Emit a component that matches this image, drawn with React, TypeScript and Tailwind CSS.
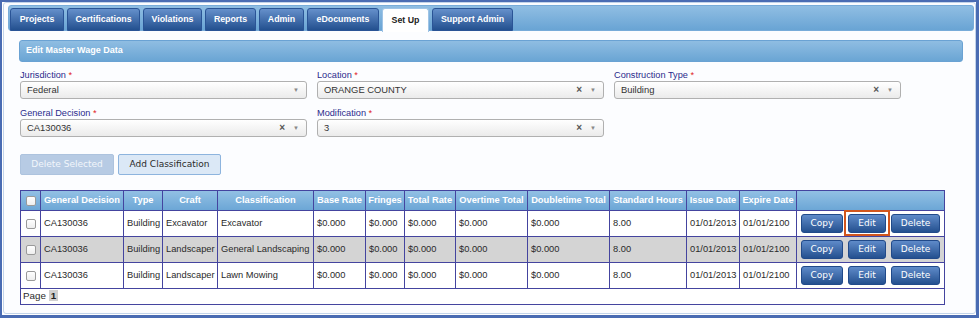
import React from "react";

const tabs = [
  { label: "Projects", w: "w-[54px]" },
  { label: "Certifications", w: "w-[73px]" },
  { label: "Violations", w: "w-[59px]" },
  { label: "Reports", w: "w-[51px]" },
  { label: "Admin", w: "w-[45px]" },
  { label: "eDocuments", w: "w-[72px]" },
  { label: "Set Up", w: "w-[47px]", active: true },
  { label: "Support Admin", w: "w-[81px]" },
];

const colWidths = [20, 83, 39, 55, 96, 52, 39, 51, 72, 82, 77, 53, 57, 148];

const headers = [
  "",
  "General Decision",
  "Type",
  "Craft",
  "Classification",
  "Base Rate",
  "Fringes",
  "Total Rate",
  "Overtime Total",
  "Doubletime Total",
  "Standard Hours",
  "Issue Date",
  "Expire Date",
  "",
];

const rows = [
  { decision: "CA130036", type: "Building", craft: "Excavator", cls: "Excavator" },
  { decision: "CA130036", type: "Building", craft: "Landscaper", cls: "General Landscaping" },
  { decision: "CA130036", type: "Building", craft: "Landscaper", cls: "Lawn Mowing" },
];

function Field({ label, value, clear }: { label: string; value: string; clear?: boolean }) {
  return (
    <div className="flex flex-col">
      <div className="h-[11px] text-[9.2px] leading-[11px] text-[#2b2b8c]">
        {label} <span className="text-[#e0201c]">*</span>
      </div>
      <div className="flex h-[18px] items-center rounded-[3px] border border-[#b0b0b0] bg-linear-to-b from-white to-[#ebebeb] pl-[6px] pr-[7px] text-[9.4px] text-[#333]">
        <span className="flex-1">{value}</span>
        {clear && <span className="mr-[8px] text-[10px] font-bold leading-none text-[#555]">×</span>}
        <span className="text-[6px] leading-none text-[#888]">▼</span>
      </div>
    </div>
  );
}

function ActionButton({ label, w, highlight }: { label: string; w: string; highlight?: boolean }) {
  return (
    <div className="relative">
      <button
        className={`${w} h-[19px] rounded-[3px] border border-[#214a8a] bg-linear-to-b from-[#5f8bc9] to-[#24508f] font-['DejaVu_Sans',sans-serif] text-[9px] text-white`}
      >
        {label}
      </button>
      {highlight && (
        <span className="absolute -left-[4px] -right-[4px] -top-[4px] -bottom-[3px] border-2 border-[#d2561d]" />
      )}
    </div>
  );
}

function Checkbox() {
  return <div className="mx-auto h-[10px] w-[10px] rounded-[2px] border border-[#9a9a9a] bg-linear-to-b from-white to-[#eeeeee]" />;
}

export default function App() {
  return (
    <div className="h-[318px] w-[979px] overflow-hidden border-t-2 border-l-2 border-r-[3px] border-b-[3px] border-[#4a6cb3] bg-white font-['Liberation_Sans',Arial,sans-serif]">
      <div className="ml-[1px] h-[312px] w-[973px] rounded-[3px] border border-[#c3d4ea] bg-[#fcfdff] pt-[2px]">
        {/* tab strip */}
        <div className="ml-[4px] mr-[1px] flex h-[26px] gap-[3px] rounded-[3px] border border-[#78acd9] bg-linear-to-b from-[#90bee3] to-[#69a4d4] pl-[1px] pt-[2px]">
          {tabs.map((t) =>
            t.active ? (
              <div
                key={t.label}
                className={`${t.w} flex h-[24px] items-center justify-center rounded-t-[3px] border border-b-0 border-[#9fc4e6] bg-white text-[8.8px] font-bold text-[#222]`}
              >
                {t.label}
              </div>
            ) : (
              <div
                key={t.label}
                className={`${t.w} flex h-[23px] items-center justify-center rounded-t-[3px] border border-[#2a5496] bg-linear-to-b from-[#6590cb] to-[#23508f] text-[8.8px] font-bold text-white`}
              >
                {t.label}
              </div>
            )
          )}
        </div>

        {/* section header */}
        <div className="ml-[15px] mr-[12px] mt-[9px] flex h-[22px] items-center rounded-[3px] border border-[#6aa2d3] bg-linear-to-b from-[#8fbde2] to-[#6aa5d4] pl-[6px] text-[9px] font-bold text-white">
          Edit Master Wage Data
        </div>

        <div className="ml-[16px] mt-[8px]">
          <div className="grid grid-cols-[287px_287px_287px] gap-x-[10px] gap-y-[9px]">
            <Field label="Jurisdiction" value="Federal" />
            <Field label="Location" value="ORANGE COUNTY" clear />
            <Field label="Construction Type" value="Building" clear />
            <Field label="General Decision" value="CA130036" clear />
            <Field label="Modification" value="3" clear />
          </div>

          <div className="mt-[17px] flex gap-[4px] font-['DejaVu_Sans',sans-serif] text-[9px]">
            <button className="h-[21px] w-[94px] rounded-[2px] border border-[#adc3de] bg-[#b7cbe4] text-[#f2f6fb]">
              Delete Selected
            </button>
            <button className="h-[21px] w-[103px] rounded-[2px] border border-[#8db4de] bg-[#dbe8f6] text-[#2a2a2a]">
              Add Classification
            </button>
          </div>

          <table className="mt-[15px] w-[924px] table-fixed border-collapse border border-[#44449f] text-[9.3px] text-[#2a2a2a]">
            <colgroup>
              {colWidths.map((w, i) => (
                <col key={i} style={{ width: w }} />
              ))}
            </colgroup>
            <thead>
              <tr className="h-[20px] bg-linear-to-b from-[#92c0e4] to-[#6aa5d5]">
                {headers.map((h, i) => (
                  <th
                    key={i}
                    className="whitespace-nowrap border border-[#44449f] px-0 text-center font-bold text-white"
                  >
                    {i === 0 ? <Checkbox /> : h}
                  </th>
                ))}
              </tr>
            </thead>
            <tbody>
              {rows.map((r, idx) => (
                <tr key={idx} className={`h-[26px] ${idx === 1 ? "bg-[#d4d4d4]" : "bg-white"}`}>
                  <td className="border border-[#44449f]">
                    <Checkbox />
                  </td>
                  <td className="whitespace-nowrap border border-[#44449f] px-[3px]">{r.decision}</td>
                  <td className="whitespace-nowrap border border-[#44449f] px-[3px]">{r.type}</td>
                  <td className="whitespace-nowrap border border-[#44449f] px-[3px]">{r.craft}</td>
                  <td className="whitespace-nowrap border border-[#44449f] px-[3px]">{r.cls}</td>
                  <td className="whitespace-nowrap border border-[#44449f] px-[3px]">$0.000</td>
                  <td className="whitespace-nowrap border border-[#44449f] px-[3px]">$0.000</td>
                  <td className="whitespace-nowrap border border-[#44449f] px-[3px]">$0.000</td>
                  <td className="whitespace-nowrap border border-[#44449f] px-[3px]">$0.000</td>
                  <td className="whitespace-nowrap border border-[#44449f] px-[3px]">$0.000</td>
                  <td className="whitespace-nowrap border border-[#44449f] px-[3px]">8.00</td>
                  <td className="whitespace-nowrap border border-[#44449f] px-[3px]">01/01/2013</td>
                  <td className="whitespace-nowrap border border-[#44449f] px-[3px]">01/01/2100</td>
                  <td className="border border-[#44449f] px-[4px]">
                    <div className="flex gap-[5px]">
                      <ActionButton label="Copy" w="w-[42px]" />
                      <ActionButton label="Edit" w="w-[38px]" highlight={idx === 0} />
                      <ActionButton label="Delete" w="w-[49px]" />
                    </div>
                  </td>
                </tr>
              ))}
              <tr className="h-[16px] bg-white">
                <td colSpan={14} className="border border-[#44449f] px-[2px] text-[9.8px]">
                  Page{" "}
                  <span className="bg-[#d0d0d0] px-[2px] font-bold text-[#222]">1</span>
                </td>
              </tr>
            </tbody>
          </table>
        </div>
      </div>
    </div>
  );
}
